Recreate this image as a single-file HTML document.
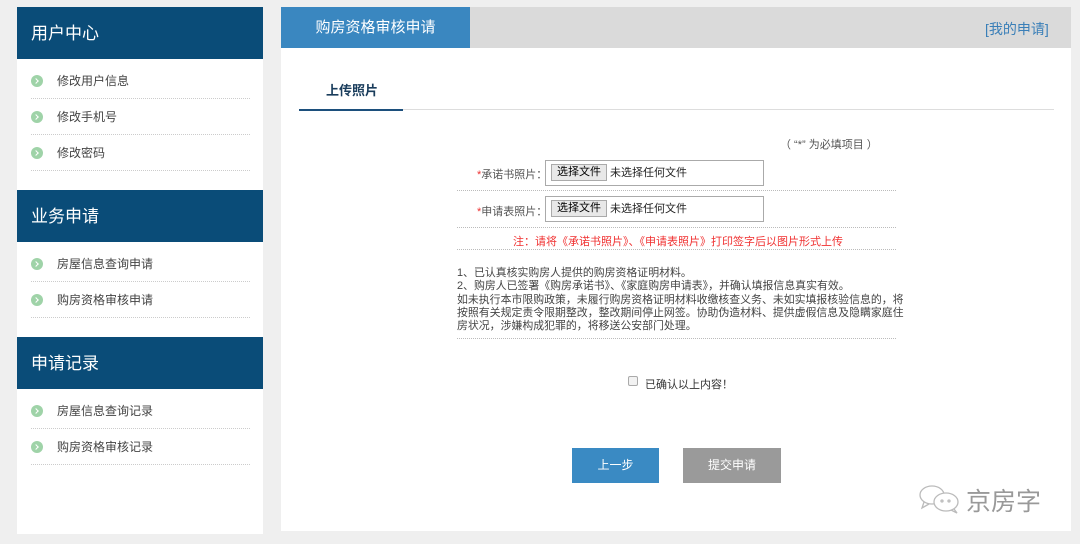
<!DOCTYPE html>
<html><head><meta charset="utf-8"><style>
*{margin:0;padding:0;box-sizing:border-box}
body{width:1080px;height:544px;background:#efefef;font-family:"Liberation Sans","Noto Sans CJK SC",sans-serif;position:relative;overflow:hidden;color:#333}
.abs{position:absolute}
.side{left:17px;top:7px;width:246px;height:527px;background:#fff}
.sh{position:absolute;left:17px;width:246px;height:52px;background:#0a4c78;color:#fff;font-size:17px;line-height:54px;padding-left:14px}
.it{position:absolute;left:31px;width:219px;height:36px;font-size:12px;color:#444;line-height:36px;padding-left:26px;border-bottom:1px dotted #ccc}
.it:before{content:"";position:absolute;left:0;top:12px;width:12px;height:12px;border-radius:50%;background:#9fd3a8}
.it:after{content:"";position:absolute;left:3px;top:16px;width:3px;height:3px;border-top:1.5px solid #fff;border-right:1.5px solid #fff;transform:rotate(45deg)}
.main{left:281px;top:7px;width:790px;height:524px;background:#fff}
.dot{position:absolute;left:457px;width:439px;border-top:1px dotted #bbb}
.lbl{position:absolute;font-size:11px;color:#555}
.inp{position:absolute;left:545px;width:219px;height:26px;border:1px solid #aaa;background:#fff}
.btnf{position:absolute;left:5px;top:3px;width:56px;height:17px;border:1px solid #aaa;background:#e8e8e8;font-size:11px;text-align:center;line-height:15px;color:#000}
.nf{position:absolute;left:64px;top:3px;font-size:11px;color:#222}
.txt{position:absolute;left:457px;top:267px;font-size:10.9px;line-height:13.3px;color:#444;width:452px}
</style></head><body>
<div class="abs side"></div>
<div class="sh" style="top:7px">用户中心</div>
<div class="it" style="top:63px">修改用户信息</div>
<div class="it" style="top:99px">修改手机号</div>
<div class="it" style="top:135px">修改密码</div>
<div class="sh" style="top:190px">业务申请</div>
<div class="it" style="top:246px">房屋信息查询申请</div>
<div class="it" style="top:282px">购房资格审核申请</div>
<div class="sh" style="top:337px">申请记录</div>
<div class="it" style="top:393px">房屋信息查询记录</div>
<div class="it" style="top:429px">购房资格审核记录</div>

<div class="abs main"></div>
<div class="abs" style="left:281px;top:7px;width:189px;height:41px;background:#3a87c0;color:#fff;font-size:15px;line-height:41px;text-align:center">购房资格审核申请</div>
<div class="abs" style="left:470px;top:7px;width:601px;height:41px;background:#dadada"></div>
<div class="abs" style="left:985px;top:19px;font-size:14px;color:#3a7fb8">[我的申请]</div>
<div class="abs" style="left:326px;top:80px;font-size:13px;font-weight:bold;color:#1a3d5c">上传照片</div>
<div class="abs" style="left:299px;top:109px;width:755px;height:1px;background:#ddd"></div>
<div class="abs" style="left:299px;top:109px;width:104px;height:2px;background:#1c4f7c"></div>

<div class="lbl" style="left:780px;top:136px">（ “*” 为必填项目 ）</div>
<div class="lbl" style="left:477px;top:166px"><span style="color:#e33">*</span>承诺书照片：</div>
<div class="inp" style="top:160px"><div class="btnf">选择文件</div><div class="nf">未选择任何文件</div></div>
<div class="dot" style="top:190px"></div>
<div class="lbl" style="left:477px;top:203px"><span style="color:#e33">*</span>申请表照片：</div>
<div class="inp" style="top:196px"><div class="btnf">选择文件</div><div class="nf">未选择任何文件</div></div>
<div class="dot" style="top:227px"></div>
<div class="lbl" style="left:513px;top:233px;color:#f03030">注：请将《承诺书照片》、《申请表照片》打印签字后以图片形式上传</div>
<div class="dot" style="top:249px"></div>
<div class="txt">1、已认真核实购房人提供的购房资格证明材料。<br>2、购房人已签署《购房承诺书》、《家庭购房申请表》，并确认填报信息真实有效。<br>如未执行本市限购政策，未履行购房资格证明材料收缴核查义务、未如实填报核验信息的，将按照有关规定责令限期整改，整改期间停止网签。协助伪造材料、提供虚假信息及隐瞒家庭住房状况，涉嫌构成犯罪的，将移送公安部门处理。</div>
<div class="dot" style="top:338px"></div>
<div class="abs" style="left:628px;top:376px;width:10px;height:10px;border:1px solid #aaa;border-radius:2px;background:#f2f2f2"></div>
<div class="lbl" style="left:645px;top:376px;color:#333">已确认以上内容！</div>
<div class="abs" style="left:572px;top:448px;width:87px;height:35px;background:#3a8ac3;color:#fff;font-size:12px;line-height:35px;text-align:center">上一步</div>
<div class="abs" style="left:683px;top:448px;width:98px;height:35px;background:#9a9a9a;color:#fff;font-size:12px;line-height:35px;text-align:center">提交申请</div>
<svg class="abs" style="left:918px;top:483px" width="46" height="32" viewBox="0 0 46 32" fill="none" stroke="#bbb" stroke-width="1.3"><ellipse cx="14" cy="12" rx="12" ry="9"/><path d="M6 19 L4 25 L11 21"/><ellipse cx="28" cy="19" rx="12" ry="9" fill="#fff"/><path d="M36 26 L39 30 L33 27"/><circle cx="24" cy="18" r="1"/><circle cx="31" cy="18" r="1"/></svg>
<div class="abs" style="left:966px;top:482px;font-size:25px;color:#999">京房字</div>
</body></html>
